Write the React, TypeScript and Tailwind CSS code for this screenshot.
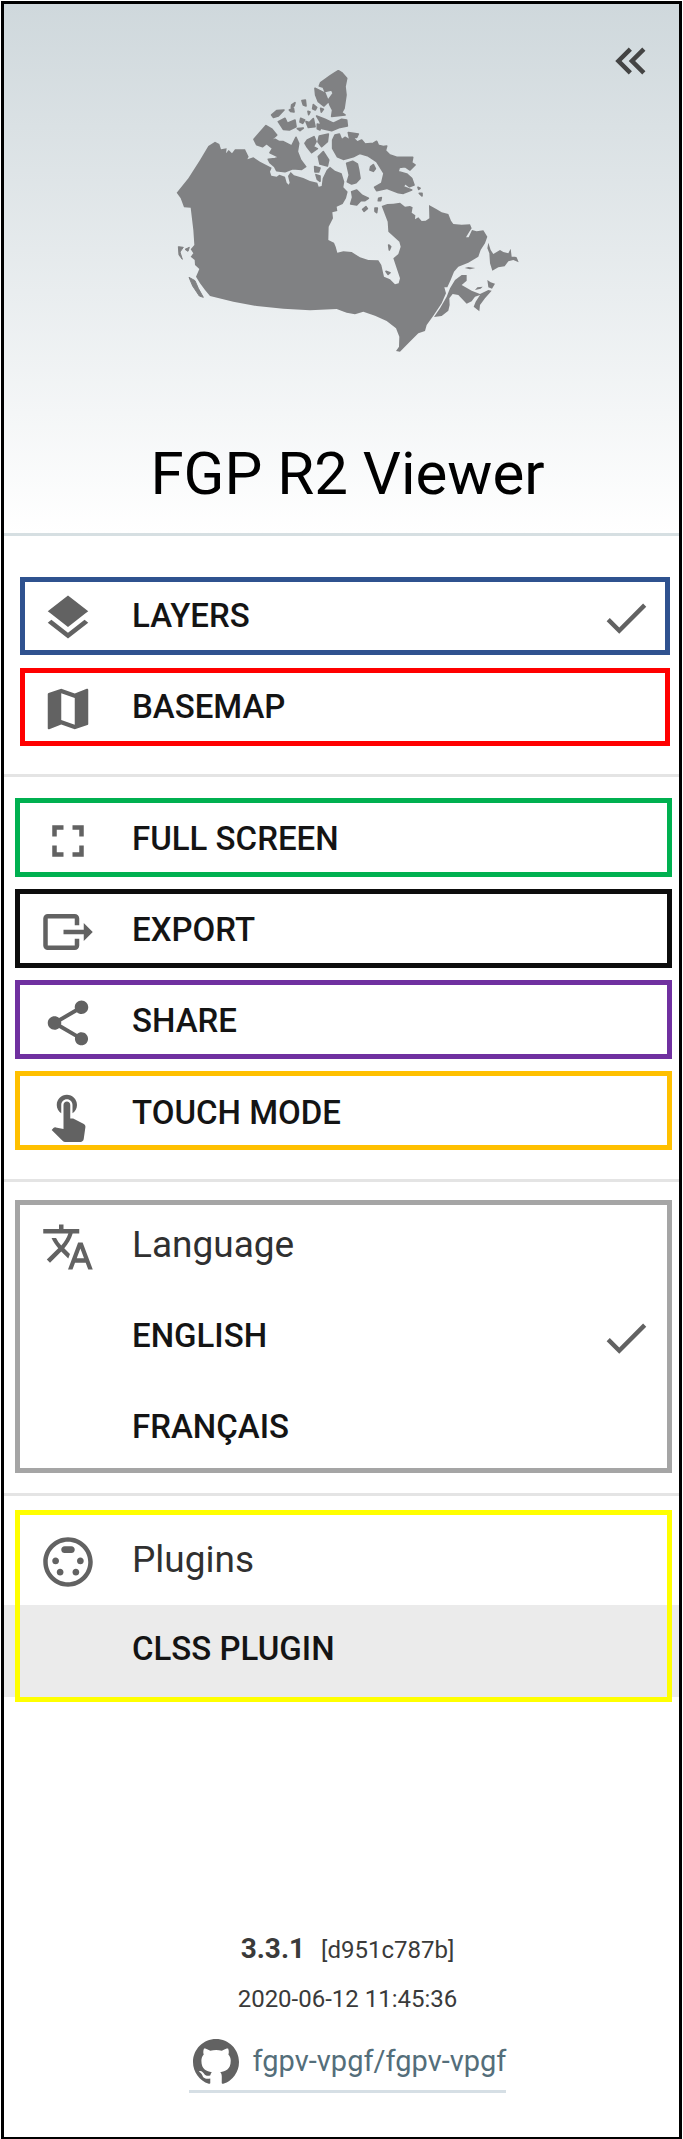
import React from "react";

type IconName =
  | "layers"
  | "map"
  | "fullscreen"
  | "export"
  | "share"
  | "touch"
  | "translate"
  | "plugin"
  | "check"
  | "collapse";

const ICONS: Record<IconName, string> = {
  layers:
    "M11.99 18.54l-7.37-5.73L3 14.07l9 7 9-7-1.63-1.27-7.38 5.74zM12 16l7.36-5.73L21 9l-9-7-9 7 1.63 1.27L12 16z",
  map: "M20.5 3l-.16.03L15 5.1 9 3 3.36 4.9c-.21.07-.36.25-.36.48V20.5c0 .28.22.5.5.5l.16-.03L9 18.9l6 2.1 5.64-1.9c.21-.07.36-.25.36-.48V3.5c0-.28-.22-.5-.5-.5zM15 19l-6-2.11V5l6 2.11V19z",
  fullscreen: "M7 14H5v5h5v-2H7v-3zm-2-4h2V7h3V5H5v5zm12 7h-3v2h5v-5h-2v3zM14 5v2h3v3h2V5h-5z",
  export:
    "M23,12L19,8V11H10V13H19V16M1,18V6C1,4.89 1.9,4 3,4H15A2,2 0 0,1 17,6V9H15V6H3V18H15V15H17V18A2,2 0 0,1 15,20H3A2,2 0 0,1 1,18Z",
  share:
    "M18 16.08c-.76 0-1.44.3-1.96.77L8.91 12.7c.05-.23.09-.46.09-.7s-.04-.47-.09-.7l7.05-4.11c.54.5 1.25.81 2.04.81 1.66 0 3-1.34 3-3s-1.34-3-3-3-3 1.34-3 3c0 .24.04.47.09.7L8.04 9.81C7.5 9.31 6.79 9 6 9c-1.66 0-3 1.34-3 3s1.34 3 3 3c.79 0 1.5-.31 2.04-.81l7.12 4.16c-.05.21-.08.43-.08.65 0 1.61 1.31 2.92 2.92 2.92 1.61 0 2.92-1.31 2.92-2.92s-1.31-2.92-2.92-2.92z",
  touch:
    "M9 11.24V7.5C9 6.12 10.12 5 11.5 5S14 6.12 14 7.5v3.74c1.21-.81 2-2.18 2-3.74C16 5.01 13.99 3 11.5 3S7 5.01 7 7.5c0 1.56.79 2.93 2 3.74zm9.84 4.63l-4.54-2.26c-.17-.07-.35-.11-.54-.11H13v-6c0-.83-.67-1.5-1.5-1.5S10 6.67 10 7.5v10.74l-3.43-.72c-.08-.01-.15-.03-.24-.03-.31 0-.59.13-.79.33l-.79.8 4.94 4.94c.27.27.65.44 1.06.44h6.79c.75 0 1.33-.55 1.44-1.28l.75-5.27c.01-.07.02-.14.02-.2 0-.62-.38-1.16-.91-1.38z",
  translate:
    "M12.87 15.07l-2.54-2.51.03-.03c1.74-1.94 2.98-4.17 3.71-6.53H17V4h-7V2H8v2H1v1.99h11.17C11.5 7.92 10.44 9.75 9 11.35 8.07 10.32 7.3 9.19 6.69 8h-2c.73 1.63 1.73 3.17 2.98 4.56l-5.09 5.02L4 19l5-5 3.11 3.11.76-2.04zM18.5 10h-2L12 22h2l1.12-3h4.75L21 22h2l-4.5-12zm-2.62 7l1.62-4.33L19.12 17h-3.24z",
  plugin:
    "M8 11.5c0-.83-.67-1.5-1.5-1.5S5 10.67 5 11.5 5.67 13 6.5 13 8 12.33 8 11.5zm7-5c0-.83-.67-1.5-1.5-1.5h-3C9.67 5 9 5.67 9 6.5S9.67 8 10.5 8h3c.83 0 1.5-.67 1.5-1.5zM8.5 15c-.83 0-1.5.67-1.5 1.5S7.67 18 8.5 18s1.5-.67 1.5-1.5S9.33 15 8.5 15zM12 1C5.93 1 1 5.93 1 12s4.93 11 11 11 11-4.93 11-11S18.07 1 12 1zm0 20c-4.96 0-9-4.04-9-9s4.04-9 9-9 9 4.04 9 9-4.04 9-9 9zm5.5-11c-.83 0-1.5.67-1.5 1.5s.67 1.5 1.5 1.5 1.5-.67 1.5-1.5-.67-1.5-1.5-1.5zm-2 5c-.83 0-1.5.67-1.5 1.5s.67 1.5 1.5 1.5 1.5-.67 1.5-1.5-.67-1.5-1.5-1.5z",
  check: "M9 16.2L4.8 12l-1.4 1.4L9 19 21 7l-1.4-1.4L9 16.2z",
  collapse:
    "M18.41,7.41L17,6L11,12L17,18L18.41,16.59L13.83,12L18.41,7.41M12.41,7.41L11,6L5,12L11,18L12.41,16.59L7.83,12L12.41,7.41Z",
};

function Icon({ name, className = "text-[#626262]" }: { name: IconName; className?: string }) {
  return (
    <svg viewBox="0 0 24 24" aria-hidden="true" className={`size-[54px] shrink-0 fill-current ${className}`}>
      <path d={ICONS[name]} />
    </svg>
  );
}

const MAINLAND =
  "M50 428L85 385 120 330 145 288 165 275 178 282 183 298 200 295 198 310 206 300 216 310 225 298 255 298 266 320 262 328 280 322 300 335 335 353 330 365 334 377 350 380 358 374 375 380 380 398 386 404 389 398 384 378 392 366 402 376 430 384 450 393 472 398 476 410 485 408 488 385 500 360 510 350 525 362 545 370 553 395 550 412 563 425 558 445 548 462 530 470 532 483 517 487 519 505 506 530 505 570 522 578 527 590 532 608 550 604 575 606 600 622 625 630 655 631 664 645 672 680 690 688 705 703 716 700 720 685 710 655 700 625 715 612 722 590 718 575 685 545 683 515 665 468 682 462 700 461 720 458 735 470 750 468 758 472 755 488 766 496 765 508 775 502 785 513 797 512 808 505 807 465 830 478 845 487 865 492 873 512 880 522 905 524 930 523 935 535 928 545 918 562 926 562 936 540 950 544 970 541 982 560 975 580 962 600 955 620 925 638 895 650 882 665 872 690 862 712 853 712 858 730 845 760 820 797 800 825 795 843 775 850 745 880 720 905 708 903 717 890 718 860 708 835 680 813 645 797 610 785 585 793 560 788 530 777 450 781 370 776 290 768 220 755 150 738 135 720 120 700 108 680 118 657 105 645 104 630 92 620 100 610 92 598 103 585 100 540 92 473 72 472 62 445Z";

const EAST =
  "M920 675L905 675 885 690 870 715 860 740 840 775 822 801 845 798 865 782 869 765 868 745 878 732 895 735 920 761 935 754 945 740 960 735 947 755 941 770 958 784 960 765 975 745 995 722 985 720 960 732 935 722 905 705 920 692ZM945 720L952 712 968 710 962 716ZM982 690L992 697 1005 701 996 716 985 712ZM914 654L925 651 946 654 930 658ZM985 578L992 600 1000 612 1020 600 1030 606 1045 610 1052 596 1055 620 1065 620 1070 622 1076 637 1060 630 1045 634 1034 649 1015 652 997 662 990 640 988 610 982 595Z";

const ARCTIC =
  "M535 62L545 68 560 85 555 110 558 135 552 175 545 188 555 195 515 199 518 180 510 165 505 150 520 130 515 120 495 124 490 112 478 108 482 98 510 78 525 68ZM465 115L495 130 505 155 492 168 475 155 467 135ZM470 198L495 208 520 220 545 208 560 210 562 228 540 232 515 242 485 235 480 215ZM355 215L375 205 382 220 405 210 408 230 388 240 370 238ZM335 195L350 182 372 180 355 198 340 202ZM438 215L448 218 460 206 465 230 445 232ZM472 222L482 225 480 240 472 236ZM395 165L405 158 402 168 394 172ZM426 152L436 150 438 168 430 165ZM460 164L470 172 466 180 458 176ZM388 180L400 174 402 186 392 184ZM444 184L450 186 446 194ZM482 175L490 178 484 186ZM422 205L434 210 428 220 420 216ZM412 236L430 234 420 242ZM282 268L318 227 336 238 350 255 325 276 308 290 290 284ZM330 275L345 268 358 275 370 275 395 288 408 262 416 280 412 305 422 330 437 350 425 358 398 356 375 365 350 362 344 350 330 338 325 328 345 326 358 322 330 308 338 295 322 282ZM442 270L462 260 468 275 460 290 472 296 455 308 442 292 435 280ZM478 258L505 252 502 275 485 290 474 275ZM475 320L490 305 506 330 502 348 480 342ZM464 350L480 354 476 366 465 366ZM468 374L480 378 480 394 472 388ZM525 255L538 252 545 270 555 262 565 268 580 264 592 276 605 270 615 282 640 280 650 274 655 286 670 290 680 288 676 302 688 314 710 322 735 322 758 322 755 338 765 345 750 360 735 350 718 352 714 365 740 372 755 385 762 405 748 410 735 400 730 410 755 420 730 430 715 428 680 415 650 422 644 412 665 400 672 370 650 335 625 318 600 310 580 320 550 328 532 320 518 295 518 270ZM565 248L595 252 590 262 568 262ZM560 340L578 334 592 342 596 360 600 385 588 398 575 402 562 395 568 375ZM575 425L590 420 606 436 625 445 615 452 602 452 590 465 572 462 578 442ZM608 478L618 470 622 476 612 484ZM645 474L652 474 650 488 645 484ZM632 350L640 344 646 356 640 364 630 360ZM656 445L664 443 662 452 655 452ZM778 430L786 430 786 438ZM774 412L780 415 776 418ZM686 585L692 590 688 600ZM678 664L690 668 684 673Z";

const WEST =
  "M87 682L105 692 115 715 130 742 118 738 98 708ZM55 590L70 592 60 606 67 628 57 615ZM75 598L88 592 84 604Z";

function CanadaMap() {
  return (
    <svg
      viewBox="45 60 1035 849"
      role="img"
      aria-label="Canada"
      className="h-[283px] w-[345px] fill-[#808183]"
    >
      <path d={MAINLAND} />
      <path d={EAST} />
      <path d={ARCTIC} stroke="#808183" strokeWidth="5" strokeLinejoin="round" />
      <path d={WEST} stroke="#808183" strokeWidth="3" />
    </svg>
  );
}

function GithubMark() {
  return (
    <svg viewBox="0 0 16 16" aria-hidden="true" className="size-[46px] shrink-0 fill-[#626262]">
      <path d="M8 0C3.58 0 0 3.58 0 8c0 3.54 2.29 6.53 5.47 7.59.4.07.55-.17.55-.38 0-.19-.01-.82-.01-1.49-2.01.37-2.53-.49-2.69-.94-.09-.23-.48-.94-.82-1.13-.28-.15-.68-.52-.01-.53.63-.01 1.08.58 1.23.82.72 1.21 1.87.87 2.33.66.07-.52.28-.87.51-1.07-1.78-.2-3.64-.89-3.64-3.95 0-.87.31-1.59.82-2.15-.08-.2-.36-1.02.08-2.12 0 0 .67-.21 2.2.82.64-.18 1.32-.27 2-.27s1.36.09 2 .27c1.53-1.04 2.2-.82 2.2-.82.44 1.1.16 1.92.08 2.12.51.56.82 1.27.82 2.15 0 3.07-1.87 3.75-3.65 3.95.29.25.54.73.54 1.48 0 1.07-.01 1.93-.01 2.2 0 .21.15.46.55.38A8.01 8.01 0 0 0 16 8c0-4.42-3.58-8-8-8z" />
    </svg>
  );
}

function BoxedItem({
  icon,
  label,
  checked = false,
  className,
}: {
  icon: IconName;
  label: string;
  checked?: boolean;
  className: string;
}) {
  return (
    <li>
      <button
        type="button"
        className={`flex w-full items-center border-[5px] text-left text-[33px] leading-10 font-medium ${className}`}
      >
        <Icon name={icon} className="mt-1 text-[#626262]" />
        <span className="ml-[37px] flex-1">{label}</span>
        {checked && <Icon name="check" className="mt-1 mr-3 text-[#626262]" />}
      </button>
    </li>
  );
}

function GroupTitle({ icon, label }: { icon: IconName; label: string }) {
  return (
    <h2 className="flex h-[91px] items-center pl-[37px] text-[37px] font-normal text-[#303030]">
      <Icon name={icon} className="mt-1 text-[#626262]" />
      <span className="ml-[37px]">{label}</span>
    </h2>
  );
}

function PlainItem({
  label,
  checked = false,
  className = "h-[91px]",
}: {
  label: string;
  checked?: boolean;
  className?: string;
}) {
  return (
    <button
      type="button"
      className={`flex w-full items-center pr-[26px] pl-32 text-left text-[33px] font-medium ${className}`}
    >
      <span className="flex-1">{label}</span>
      {checked && <Icon name="check" className="mt-1 text-[#626262]" />}
    </button>
  );
}

export default function App() {
  return (
    <div className="bg-white p-px font-[Roboto,sans-serif] text-[#141414]">
      <div className="border-[3px] border-black">
        <header className="relative flex flex-col items-center border-b-[3px] border-[#d6dfe2] bg-linear-to-b from-[#cfd8dc] to-white pt-[66px] pb-[21px] pl-3">
          <button type="button" aria-label="Close menu" className="absolute top-[30px] right-[21px]">
            <Icon name="collapse" className="text-[#444444]" />
          </button>
          <CanadaMap />
          <h1 className="mt-[83px] text-[60px] leading-[76px] font-normal text-black">FGP R2 Viewer</h1>
        </header>

        <nav>
          <ul className="flex flex-col gap-[13px] border-b-[3px] border-[#e4e4e4] pt-[41px] pr-[9px] pb-7 pl-4">
            <BoxedItem icon="layers" label="LAYERS" checked className="h-[78px] border-[#2f528f] pl-4" />
            <BoxedItem icon="map" label="BASEMAP" className="h-[78px] border-[#ff0000] pl-4" />
          </ul>

          <ul className="flex flex-col gap-3 border-b-[3px] border-[#e4e4e4] pt-[21px] pr-[7px] pb-[29px] pl-[11px]">
            <BoxedItem icon="fullscreen" label="FULL SCREEN" className="h-[79px] border-[#00b050] pt-0.5 pl-[21px]" />
            <BoxedItem icon="export" label="EXPORT" className="h-[79px] border-[#0d0d0d] pt-0.5 pl-[21px]" />
            <BoxedItem icon="share" label="SHARE" className="h-[79px] border-[#7030a0] pt-0.5 pl-[21px]" />
            <BoxedItem icon="touch" label="TOUCH MODE" className="h-[79px] border-[#ffc000] pt-1 pl-[21px]" />
          </ul>

          <section className="relative border-b-[3px] border-[#e4e4e4] pt-[17px] pb-[21px]">
            <GroupTitle icon="translate" label="Language" />
            <PlainItem label="ENGLISH" checked />
            <PlainItem label="FRANÇAIS" />
            <div className="pointer-events-none absolute top-[18px] right-[7px] bottom-5 left-[11px] border-[5px] border-[#a5a5a5]" />
          </section>

          <section className="relative pt-[18px] pb-[5px]">
            <GroupTitle icon="plugin" label="Plugins" />
            <PlainItem label="CLSS PLUGIN" className="h-[92px] bg-[#ebebeb] pb-1" />
            <div className="pointer-events-none absolute top-[14px] right-[7px] bottom-0 left-[11px] border-[5px] border-[#ffff00]" />
          </section>
        </nav>

        <footer className="flex flex-col items-center pt-[222px] pb-11 pl-3 text-[24px] leading-[49px] text-[#3a3a3a]">
          <p>
            <span className="mr-4 text-[28px] font-bold">3.3.1</span>
            <span>[d951c787b]</span>
          </p>
          <p>2020-06-12 11:45:36</p>
          <a
            href="https://github.com/fgpv-vpgf/fgpv-vpgf"
            className="mt-[13px] flex items-center gap-[14px] border-b-[3px] border-[#d6dfe5] pb-1 pl-1 text-[29px] text-[#546e7a]"
          >
            <GithubMark />
            fgpv-vpgf/fgpv-vpgf
          </a>
        </footer>
      </div>
    </div>
  );
}
